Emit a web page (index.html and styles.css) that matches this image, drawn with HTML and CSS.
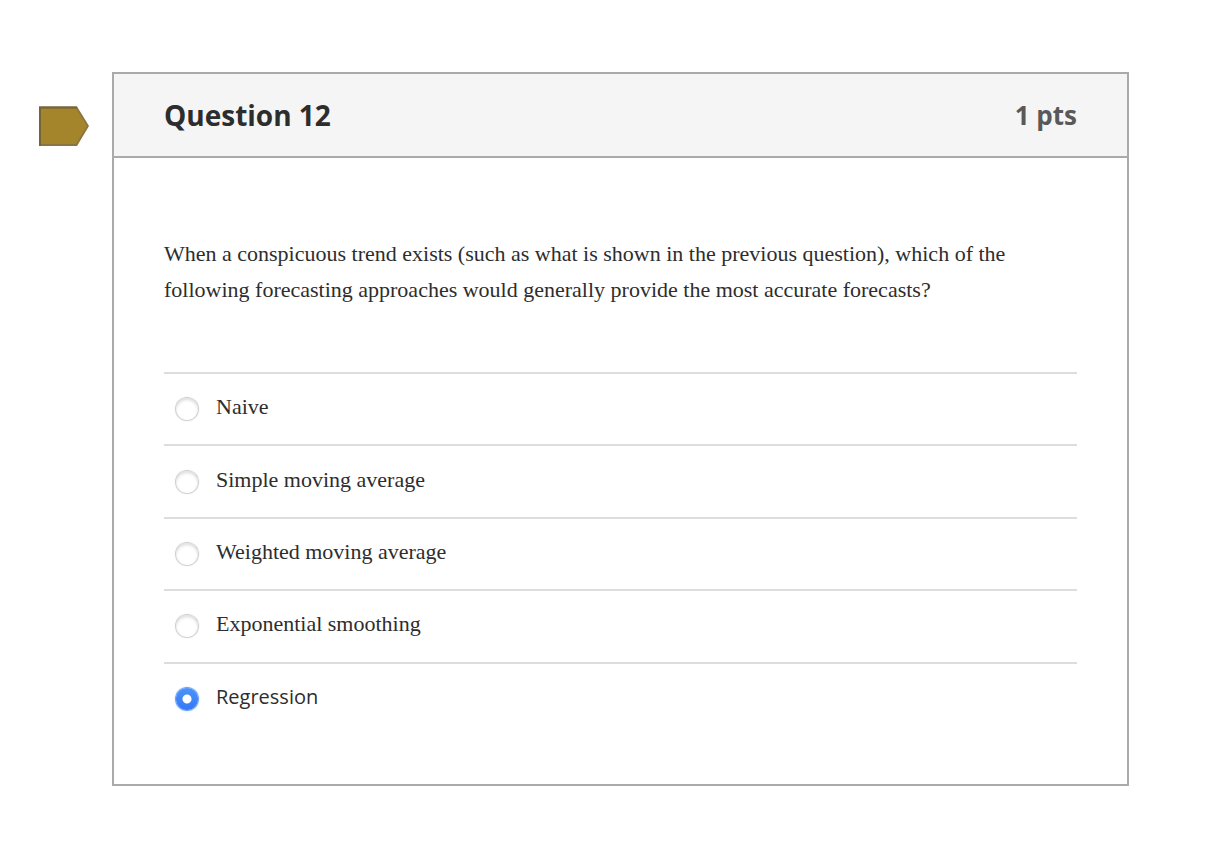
FILE: index.html
```html
<!DOCTYPE html>
<html lang="en">
<head>
    <meta charset="UTF-8">
    <meta name="viewport" content="width=device-width, initial-scale=1.0">
    <title>Question 12</title>
    <link rel="stylesheet" href="styles.css">
</head>
<body>
    <main class="quiz">
        <button class="flag" type="button" aria-label="Flag question">
            <svg width="52" height="42" viewBox="0 0 52 42">
                <path d="M1 1.5H39L51 21L39 41H1Z" fill="#8a7442"/>
                <path d="M3 3.5H38L49 21L38 39H3Z" fill="#a5852b"/>
                <path d="M2 41V2.5H39" fill="none" stroke="#756534" stroke-width="2"/>
            </svg>
        </button>
        <form class="question">
            <div class="question-header">
                <h1>Question 12</h1>
                <span class="points">1 pts</span>
            </div>
            <div class="question-body">
                <p class="question-text">When a conspicuous trend exists (such as what is shown in the previous question), which of the following forecasting approaches would generally provide the most accurate forecasts?</p>
                <div class="answers">
                    <label class="answer"><input type="radio" name="answer"><span>Naive</span></label>
                    <label class="answer"><input type="radio" name="answer"><span>Simple moving average</span></label>
                    <label class="answer"><input type="radio" name="answer"><span>Weighted moving average</span></label>
                    <label class="answer"><input type="radio" name="answer"><span>Exponential smoothing</span></label>
                    <label class="answer plain"><input type="radio" name="answer" checked><span>Regression</span></label>
                </div>
            </div>
        </form>
    </main>
</body>
</html>
```
FILE: styles.css
```css
* {
    box-sizing: border-box;
}
body {
    margin: 0;
    background: white;
    color: #2d2d2e;
    font-family: "Open Sans", sans-serif;
}
.quiz {
    display: flex;
    align-items: flex-start;
    gap: 22px;
    padding: 72px 93px 62px 38px;
}
.flag {
    margin-top: 33px;
    padding: 0;
    border: none;
    background: none;
    cursor: pointer;
}
.flag svg {
    display: block;
}
.question {
    flex: 1;
    border: 2px solid #aaa;
}
.question-header {
    display: flex;
    align-items: center;
    justify-content: space-between;
    min-height: 84px;
    padding: 0 50px;
    background: #f5f5f5;
    border-bottom: 2px solid #aaa;
}
.question-header h1 {
    margin: 0;
    font-size: 28px;
    font-weight: 700;
}
.points {
    color: #595959;
    font-size: 26px;
    font-weight: 700;
}
.question-body {
    padding: 78px 50px 50px;
}
.question-text {
    margin: 0 0 64px;
    font-family: "Liberation Serif", serif;
    font-size: 22px;
    line-height: 36px;
}
.answers {
    display: grid;
    grid-auto-rows: 1fr;
    min-height: 362px;
}
.answer {
    display: flex;
    align-items: center;
    gap: 18px;
    padding: 0 12px;
    border-top: 2px solid #ddd;
    font-family: "Liberation Serif", serif;
    font-size: 22px;
    cursor: pointer;
}
.answer span {
    padding-bottom: 4px;
}
.answer.plain {
    font-family: "Open Sans", sans-serif;
    font-size: 20px;
}
.answer input {
    appearance: none;
    flex: none;
    width: 22px;
    height: 22px;
    margin: 0;
    border-radius: 50%;
    background: white;
    box-shadow: 0 0 1px 1px #ccc, inset 0 2px 3px #ddd;
}
.answer input:checked {
    background: radial-gradient(circle, white 4px, transparent 5px), linear-gradient(#4c93fa, #3478f6);
    box-shadow: 0 0 1px 1px #5a96f5;
}
```
